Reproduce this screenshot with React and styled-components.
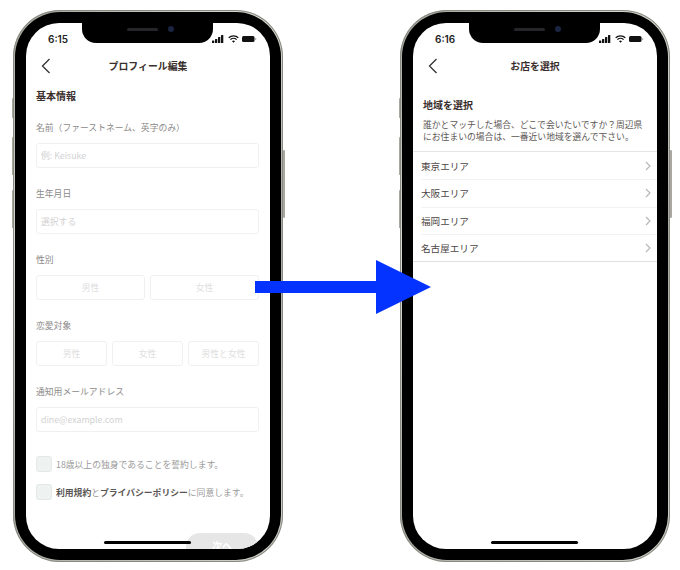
import React from 'react'
import styled, { createGlobalStyle } from 'styled-components'

const GlobalStyle = createGlobalStyle`
  html, body {
    margin: 0;
    padding: 0;
    background: #fff;
  }
  * {
    box-sizing: border-box;
  }
`

const Page = styled.div`
  position: relative;
  width: 680px;
  height: 570px;
  padding: 10px 0 0 13px;
  display: flex;
  gap: 117px;
  overflow: hidden;
  background: #fff;
  font-family: "Noto Sans CJK JP", "Noto Sans", sans-serif;
  color: #3a3230;
`

const Phone = styled.div`
  position: relative;
  width: 270px;
  height: 552px;
  padding: 2px;
  border-radius: 47px;
  background: linear-gradient(135deg, #a3a39c, #dcdcd6 30%, #a9a9a2 60%, #d2d2cc);
  box-shadow: inset 0 0 0 1px #8a8a82;
`

const Bezel = styled.div`
  width: 100%;
  height: 100%;
  padding: 11px;
  border-radius: 45px;
  background: #000;
`

const Screen = styled.div`
  position: relative;
  width: 100%;
  height: 100%;
  border-radius: 33px;
  background: #fff;
  overflow: hidden;
`

const SideKey = styled.span`
  position: absolute;
  width: 1.5px;
  top: ${(p) => p.$top}px;
  height: ${(p) => p.$h}px;
  ${(p) => (p.$right ? 'right: -1.5px;' : 'left: -1.5px;')}
  background: #a8a8a1;
  border-radius: 1px;
`

const Notch = styled.div`
  position: absolute;
  top: 0;
  left: 56px;
  width: 131px;
  height: 20px;
  background: #000;
  border-radius: 0 0 14px 14px;
  display: flex;
  align-items: center;
  justify-content: center;
  gap: 10px;
  padding: 0 0 8px 6px;
`

const Speaker = styled.span`
  width: 31px;
  height: 3px;
  border-radius: 2px;
  background: #26262a;
`

const Camera = styled.span`
  width: 6px;
  height: 6px;
  border-radius: 50%;
  background: #1b2440;
`

const StatusBar = styled.div`
  height: 30px;
  padding: 2px 13px 0 22px;
  display: flex;
  align-items: center;
  justify-content: space-between;
`

const Time = styled.span`
  font-family: "Inter", "Liberation Sans", sans-serif;
  font-size: 10px;
  font-weight: 600;
  color: #222;
`

const StatusIcons = styled.div`
  display: flex;
  align-items: center;
  gap: 3px;
`

const NavBar = styled.div`
  position: relative;
  height: 26px;
  display: flex;
  align-items: center;
  justify-content: center;
`

const BackIcon = styled.svg`
  position: absolute;
  left: 15px;
  top: 5px;
`

const NavTitle = styled.h1`
  margin: 0;
  font-size: 9.9px;
  font-weight: 700;
  color: #3a2e2c;
`

const Form = styled.div`
  padding: 9px 11px 0 10px;
  display: flex;
  flex-direction: column;
`

const SectionTitle = styled.h2`
  margin: 0;
  height: 16px;
  line-height: 16px;
  font-size: 10px;
  font-weight: 700;
  color: #3a2e2c;
`

const Label = styled.div`
  margin-top: ${(p) => p.$gap || 18}px;
  height: 15px;
  line-height: 15px;
  margin-bottom: 8px;
  font-size: 8.8px;
  color: #8c8a89;
`

const Field = styled.div`
  height: 25px;
  padding: 0 4px;
  display: flex;
  align-items: center;
  border: 1px solid #f0f0ef;
  border-radius: 3px;
  font-size: 8.8px;
  color: #d2d2d2;
  background: #fff;
`

const Options = styled.div`
  display: flex;
  gap: 5px;
`

const Option = styled.div`
  flex: 1;
  height: 25px;
  display: flex;
  align-items: center;
  justify-content: center;
  border: 1px solid #f0f0ef;
  border-radius: 3px;
  font-size: 8.8px;
  color: #e0e0e0;
`

const Agree = styled.div`
  margin-top: ${(p) => p.$gap}px;
  height: 16px;
  display: flex;
  align-items: center;
  gap: 4px;
  font-size: 8.8px;
  color: #9a9a9a;
  white-space: nowrap;
`

const Check = styled.span`
  width: 16px;
  height: 16px;
  flex: none;
  border: 1px solid #e4e9e7;
  border-radius: 3px;
  background: #eef2f0;
`

const Strong = styled.b`
  font-weight: 700;
  color: #5a5654;
`

const NextButton = styled.div`
  position: absolute;
  left: 160px;
  top: 510px;
  width: 72px;
  height: 30px;
  padding-top: 5px;
  border-radius: 14px;
  background: #e6e6e6;
  color: #fff;
  font-size: 10px;
  font-weight: 700;
  text-align: center;
`

const HomeBar = styled.div`
  position: absolute;
  left: 78px;
  bottom: 5px;
  width: 87px;
  height: 3px;
  border-radius: 2px;
  background: #000;
`

const Intro = styled.div`
  padding: 18px 10px 8px;
`

const Description = styled.p`
  margin: 6px 0 0;
  font-size: 8.8px;
  line-height: 12px;
  white-space: nowrap;
  color: #5e5856;
`

const AreaList = styled.ul`
  margin: 0;
  padding: 0;
  list-style: none;
  border-top: 1px solid #e6e6e6;
  border-bottom: 1px solid #e0e0e0;
`

const AreaRow = styled.li`
  height: 27.3px;
  margin-left: 8px;
  padding-right: 6px;
  display: flex;
  align-items: center;
  justify-content: space-between;
  font-size: 9.6px;
  color: #4c4644;
  & + & {
    border-top: 1px solid #f2f2f2;
  }
`

const Arrow = styled.svg`
  position: absolute;
  left: 255px;
  top: 259px;
`

const SignalIcons = () => (
  <StatusIcons>
    <svg width="13" height="8" viewBox="0 0 13 8">
      <rect x="0" y="5.5" width="2.3" height="2.5" rx="0.5" fill="#111" />
      <rect x="3" y="4" width="2.3" height="4" rx="0.5" fill="#111" />
      <rect x="6" y="2" width="2.3" height="6" rx="0.5" fill="#111" />
      <rect x="9" y="0" width="2.3" height="8" rx="0.5" fill="#111" />
    </svg>
    <svg width="11" height="8" viewBox="0 0 11 8" fill="none" stroke="#111" strokeWidth="1.3">
      <path d="M0.7 2.8a6.8 6.8 0 0 1 9.6 0" />
      <path d="M2.4 4.6a4.4 4.4 0 0 1 6.2 0" />
      <path d="M5.5 7.8 4 6.3a2.2 2.2 0 0 1 3 0z" fill="#111" stroke="none" />
    </svg>
    <svg width="15" height="8" viewBox="0 0 15 8">
      <rect x="0" y="1" width="12.5" height="6" rx="1.5" fill="#111" />
      <rect x="13.2" y="3" width="1" height="2" rx="0.5" fill="#999" />
    </svg>
  </StatusIcons>
)

const Back = () => (
  <BackIcon width="10" height="16" viewBox="0 0 10 16" fill="none" stroke="#333" strokeWidth="1.3">
    <path d="M8.5 1 1.5 8l7 7" />
  </BackIcon>
)

const Chevron = () => (
  <svg width="6" height="10" viewBox="0 0 6 10" fill="none" stroke="#b5b5b5" strokeWidth="1.1">
    <path d="M1 1l4 4-4 4" />
  </svg>
)

const Device = ({ time, title, children }) => (
  <Phone>
    <SideKey $top={88} $h={20} />
    <SideKey $top={127} $h={38} />
    <SideKey $top={180} $h={38} />
    <SideKey $right $top={140} $h={68} />
    <Bezel>
      <Screen>
        <Notch>
          <Speaker />
          <Camera />
        </Notch>
        <StatusBar>
          <Time>{time}</Time>
          <SignalIcons />
        </StatusBar>
        <NavBar>
          <Back />
          <NavTitle>{title}</NavTitle>
        </NavBar>
        {children}
        <HomeBar />
      </Screen>
    </Bezel>
  </Phone>
)

const areas = ['東京エリア', '大阪エリア', '福岡エリア', '名古屋エリア']

export default function App() {
  return (
    <Page>
      <GlobalStyle />
      <Device time="6:15" title="プロフィール編集">
        <Form>
          <SectionTitle>基本情報</SectionTitle>
          <Label $gap={16}>名前（ファーストネーム、英字のみ）</Label>
          <Field>例: Keisuke</Field>
          <Label>生年月日</Label>
          <Field>選択する</Field>
          <Label>性別</Label>
          <Options>
            <Option>男性</Option>
            <Option>女性</Option>
          </Options>
          <Label>恋愛対象</Label>
          <Options>
            <Option>男性</Option>
            <Option>女性</Option>
            <Option>男性と女性</Option>
          </Options>
          <Label>通知用メールアドレス</Label>
          <Field>dine@example.com</Field>
          <Agree $gap={24}>
            <Check />
            18歳以上の独身であることを誓約します。
          </Agree>
          <Agree $gap={12}>
            <Check />
            <span>
              <Strong>利用規約</Strong>と<Strong>プライバシーポリシー</Strong>に同意します。
            </span>
          </Agree>
        </Form>
        <NextButton>次へ</NextButton>
      </Device>
      <Device time="6:16" title="お店を選択">
        <Intro>
          <SectionTitle>地域を選択</SectionTitle>
          <Description>
            誰かとマッチした場合、どこで会いたいですか？周辺県
            <br />
            にお住まいの場合は、一番近い地域を選んで下さい。
          </Description>
        </Intro>
        <AreaList>
          {areas.map((area) => (
            <AreaRow key={area}>
              {area}
              <Chevron />
            </AreaRow>
          ))}
        </AreaList>
      </Device>
      <Arrow width="176" height="56" viewBox="0 0 176 56">
        <path d="M0 22h121V1l55 27-55 27V34H0z" fill="#0433ff" />
      </Arrow>
    </Page>
  )
}
